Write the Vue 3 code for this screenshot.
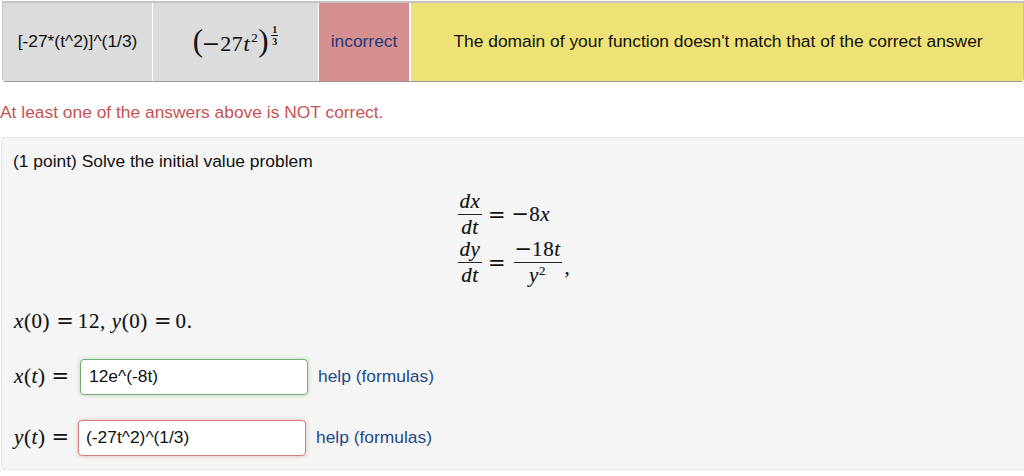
<script setup>
const answers = [
  { id: 'x', name: 'x', value: '12e^(-8t)', state: 'ok' },
  { id: 'y', name: 'y', value: '(-27t^2)^(1/3)', state: 'bad' },
]
</script>

<template>
  <div class="page">
    <div class="results">
      <div class="cell c1">[-27*(t^2)]^(1/3)</div>
      <div class="cell c2">
        <span class="math big"><span class="paren">(</span><span class="sym minus">−</span>27<i>t</i><sup>2</sup><span class="paren">)</span></span>
        <span class="expfrac"><span>1</span><span class="under">3</span></span>
      </div>
      <div class="cell c3">incorrect</div>
      <div class="cell c4">The domain of your function doesn't match that of the correct answer</div>
    </div>

    <p class="warning">At least one of the answers above is NOT correct.</p>

    <div class="well">
      <p class="intro">(1 point) Solve the initial value problem</p>

      <div class="system math">
        <div class="eq">
          <span class="frac"><i>dx</i><i class="den">dt</i></span>
          <span class="sym">=</span>
          <span><span class="sym">−</span>8<i>x</i></span>
        </div>
        <div class="eq second">
          <span class="frac"><i>dy</i><i class="den">dt</i></span>
          <span class="sym">=</span>
          <span class="frac wide"><span><span class="sym">−</span>18<i>t</i></span><span class="den"><i>y</i><sup>2</sup></span></span>
          <span class="comma">,</span>
        </div>
      </div>

      <p class="initial math"><i>x</i>(0)<span class="sym gap">=</span>12, <i>y</i>(0)<span class="sym gap">=</span>0.</p>

      <div v-for="a in answers" :key="a.id" class="answer" :class="a.id">
        <span class="math label"><i>{{ a.name }}</i>(<i>t</i>)<span class="sym gap">=</span></span>
        <input class="field" :class="a.state" :value="a.value" readonly />
        <a class="help">help (formulas)</a>
      </div>
    </div>
  </div>
</template>

<style>
html, body { margin: 0; background: #fff; }
</style>

<style scoped>
.page {
  width: 1024px;
  height: 476px;
  overflow: hidden;
  font-family: "Liberation Sans", Arial, sans-serif;
  font-size: 17.4px;
  color: #111;
  padding-top: 1px;
  box-sizing: border-box;
}
.results {
  display: grid;
  grid-template-columns: 149px 165px 90px 1fr;
  column-gap: 1px;
  height: 81px;
  margin-left: 2px;
  box-sizing: border-box;
  background: #fff;
  border-top: 2px solid #c4c4c4;
  border-bottom: 1px solid #999;
  border-left: 1px solid #c4c4c4;
  border-right: 1px solid #c4c4c4;
  border-radius: 0 0 4px 4px;
}
.cell {
  display: flex;
  align-items: center;
  justify-content: center;
  padding-bottom: 2px;
  box-sizing: border-box;
  white-space: nowrap;
}
.c1, .c2 { background: #dcdcdc; }
.c3 { background: #d68f8f; color: #1f3a7d; }
.c4 { background: #eee276; margin-left: 1px; padding-left: 2px; }
.math {
  font-family: "Liberation Serif", "Times New Roman", serif;
  letter-spacing: 0.6px;
  -webkit-text-stroke: 0.15px #111;
}
.math i { font-style: italic; }
.sym { font-family: "DejaVu Sans", sans-serif; -webkit-text-stroke: 0; letter-spacing: 0; }
.gap { margin: 0 4px 0 6px; }
.big { font-size: 22px; display: inline-flex; align-items: baseline; }
.big sup { font-size: 13px; line-height: 0; vertical-align: 9px; margin-left: 1px; position: relative; top: -9px; }
.minus { margin-left: -2px; }
.paren { font-size: 31px; font-weight: 300; line-height: 1; -webkit-text-stroke: 0; }
.expfrac {
  display: inline-flex;
  flex-direction: column;
  align-items: center;
  font-family: "Liberation Serif", serif;
  font-size: 10px;
  font-weight: 700;
  line-height: 10px;
  margin: -10px 0 0 2px;
}
.expfrac .under { border-top: 1px solid #111; padding-top: 1px; width: 7px; text-align: center; }
.warning {
  margin: 0;
  height: 55px;
  padding-top: 21px;
  box-sizing: border-box;
  color: #c65353;
  line-height: 19px;
}
.well {
  margin-left: 1px;
  height: 333px;
  box-sizing: border-box;
  background: #f5f5f5;
  border: 1px solid #e6e6e6;
  border-right: 0;
  border-radius: 4px 0 0 4px;
  padding: 13px 0 0 11px;
}
.intro { margin: 0; line-height: 20px; }
.system {
  margin: 18px 0 0 445px;
  font-size: 21px;
}
.eq { display: flex; align-items: center; height: 51px; gap: 6px; }
.eq.second { height: 49px; margin-top: -2px; }
.frac {
  display: inline-flex;
  flex-direction: column;
  align-items: center;
  width: 24px;
  line-height: 25px;
}
.frac.wide { width: 48px; margin-left: 2px; }
.frac .den { border-top: 1.5px solid #222; align-self: stretch; text-align: center; }
.frac sup { font-size: 13px; line-height: 0; vertical-align: 7px; }
.comma { margin: 10px 0 0 -3px; }
.initial { margin: 22px 0 0 1px; font-size: 21px; line-height: 24px; white-space: nowrap; }
.answer { display: flex; align-items: center; height: 36px; }
.answer.x { margin-top: 26px; }
.answer.y { margin-top: 25px; }
.label { font-size: 21px; margin-left: 1px; margin-bottom: 2px; white-space: nowrap; }
.answer.x .label { width: 66px; }
.answer.y .label { width: 64px; }
.field {
  width: 228px;
  height: 36px;
  box-sizing: border-box;
  border-radius: 4px;
  background: #fff;
  font: 17.4px "Liberation Sans", Arial, sans-serif;
  color: #111;
  padding: 0 8px 2px;
  outline: none;
}
.field.ok { border: 1px solid #74ae74; box-shadow: 0 0 4px rgba(110, 170, 110, 0.45); }
.field.bad { border: 1px solid #d07f7f; box-shadow: 0 0 4px rgba(205, 110, 110, 0.45); padding-left: 7px; }
.help { margin-left: 10px; margin-bottom: 2px; color: #1f4a85; }
</style>
